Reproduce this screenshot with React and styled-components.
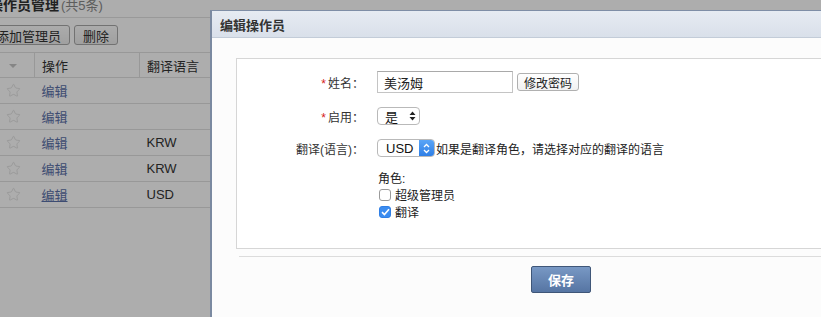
import React from 'react';
import styled, { createGlobalStyle } from 'styled-components';
import { Star } from 'lucide-react';

const GlobalStyle = createGlobalStyle`
  html, body { margin: 0; padding: 0; background: #fff; overflow: hidden; }
  body {
    font-family: "Liberation Sans", "Noto Sans CJK SC", sans-serif;
    font-size: 12px;
    color: #333;
  }
`;

/* --- page under the dialog --- */
const Page = styled.div`
  position: relative;
  width: 821px;
  height: 317px;
  overflow: hidden;
`;

const PageInner = styled.div`
  margin-left: -13px;
`;

const TitleBar = styled.div`
  height: 21px;
  border-bottom: 1px solid #e2e2e2;
  box-sizing: border-box;
  padding-left: 2px;
`;

const PageTitle = styled.h2`
  margin: -3px 0 0;
  font-size: 14px;
  line-height: 16px;
  font-weight: 700;
  color: #333;
`;

const Count = styled.span`
  font-weight: 400;
  font-size: 13px;
  color: #8a8a8a;
  margin-left: 2px;
`;

const Toolbar = styled.div`
  display: flex;
  gap: 4px;
  padding: 7px 0;
`;

const ToolButton = styled.button`
  height: 20px;
  padding: 0 8px;
  font-family: inherit;
  font-size: 13px;
  color: #333;
  background: linear-gradient(#fdfdfd, #ececec);
  border: 1px solid #a8a8a8;
  border-radius: 3px;
`;

const Table = styled.table`
  width: 480px;
  border-collapse: collapse;
  font-size: 13px;
`;

const Th = styled.th`
  height: 24px;
  padding: 0 0 0 ${({ pad }) => pad ?? 7}px;
  width: ${({ w }) => w}px;
  text-align: left;
  font-weight: 400;
  color: #333;
  border-top: 1px solid #e0e0e0;
  border-bottom: 1px solid #e0e0e0;
  border-right: 1px solid #e0e0e0;
`;

const Caret = styled.span`
  display: inline-block;
  margin-left: 22px;
  border-left: 4px solid transparent;
  border-right: 4px solid transparent;
  border-top: 4px solid #c4c4c4;
  vertical-align: middle;
`;

const Tr = styled.tr`
  border-bottom: 1px solid #e0e0e0;
`;

const Td = styled.td`
  height: 26px;
  box-sizing: border-box;
  padding: 0 0 0 ${({ pad }) => pad ?? 7}px;
  color: #333;
  vertical-align: middle;
`;

const StarCell = styled(Td)`
  padding-left: 19px;
  line-height: 0;
`;

const EditLink = styled.a`
  color: #5b70a8;
  text-decoration: ${({ underline }) => (underline ? 'underline' : 'none')};
`;

const Overlay = styled.div`
  position: absolute;
  inset: 0;
  background: rgba(0, 0, 0, 0.32);
`;

/* --- dialog --- */
const Modal = styled.div`
  position: absolute;
  left: 210px;
  top: 10px;
  width: 700px;
  height: 400px;
  background: #fcfcfc;
  border-left: 2px solid #7b8aa1;
  border-top: 1px solid #7f8ea6;
`;

const ModalHeader = styled.div`
  height: 26px;
  display: flex;
  align-items: center;
  padding-left: 8px;
  background: linear-gradient(#e6ebf2, #d9e0ea);
  border-bottom: 1px solid #c3ccd8;
  font-size: 13px;
  font-weight: 700;
  color: #333;
`;

const ModalBody = styled.div`
  padding: 20px 0 0 24px;
`;

const Fieldset = styled.div`
  height: 191px;
  background: #fff;
  border: 1px solid #d6d6d6;
  padding-top: 12px;
  box-sizing: border-box;
`;

const FormRow = styled.div`
  display: grid;
  grid-template-columns: 127px 1fr;
  column-gap: 13px;
  align-items: center;
  margin-bottom: ${({ mb }) => mb ?? 14}px;
`;

const Label = styled.label`
  text-align: right;
  font-size: 12px;
  color: #333;
`;

const Required = styled.span`
  color: #d42020;
  font-size: 12px;
  margin-right: 2px;
`;

const Controls = styled.div`
  display: flex;
  align-items: center;
  gap: ${({ gap }) => gap ?? 0}px;
`;

const TextInput = styled.div`
  width: 136px;
  height: 22px;
  box-sizing: border-box;
  border: 1px solid #c4c4c4;
  border-top-color: #a9a9a9;
  padding: 0 6px;
  display: flex;
  align-items: center;
  font-size: 13px;
  color: #222;
`;

const SmallButton = styled.button`
  height: 18px;
  padding: 0 6px;
  font-family: inherit;
  font-size: 12px;
  color: #222;
  background: linear-gradient(#fff, #f1f1f1);
  border: 1px solid #b0b0b0;
  border-radius: 3px;
`;

const Select = styled.div`
  width: ${({ w }) => w}px;
  height: 18px;
  box-sizing: border-box;
  border: 1px solid #b9b9b9;
  border-radius: 4px;
  background: #fff;
  display: flex;
  align-items: center;
  overflow: hidden;
  font-size: 13px;
  color: #111;
`;

const SelectText = styled.span`
  flex: 1;
  padding-left: ${({ pad }) => pad ?? 7}px;
`;

const SelectArrow = styled.span`
  width: ${({ blue }) => (blue ? 15 : 14)}px;
  height: 100%;
  display: flex;
  align-items: center;
  justify-content: center;
  background: ${({ blue }) => (blue ? 'linear-gradient(#5aa5f7, #2f7fe6)' : 'transparent')};
`;

const Hint = styled.span`
  font-size: 12px;
  color: #222;
`;

const RoleBlock = styled.div`
  padding-left: 140px;
  margin-top: 15px;
`;

const RoleTitle = styled.div`
  height: 14px;
  line-height: 14px;
  font-size: 12px;
  color: #222;
  padding-left: 1px;
`;

const CheckRow = styled.div`
  height: 17px;
  display: flex;
  align-items: center;
  gap: 4px;
  padding-left: 2px;
  font-size: 12px;
  color: #222;
`;

const Box = styled.span`
  width: 12px;
  height: 12px;
  box-sizing: border-box;
  border-radius: 3px;
  border: 1px solid ${({ checked }) => (checked ? '#2f7fe6' : '#9a9a9a')};
  background: ${({ checked }) => (checked ? '#3b8cf0' : '#fff')};
  display: flex;
  align-items: center;
  justify-content: center;
`;

const Footer = styled.div`
  margin: 7px 0 0 3px;
  border-top: 1px solid #dcdcdc;
  padding: 9px 0 0 292px;
`;

const SaveButton = styled.button`
  width: 60px;
  height: 27px;
  font-family: inherit;
  font-size: 13px;
  font-weight: 700;
  color: #fff;
  background: linear-gradient(#7898c4, #5675a3);
  border: 1px solid #3f5678;
  border-radius: 2px;
`;

const UpDown = ({ color }) => (
  <svg width="7" height="10" viewBox="0 0 7 10">
    <path d="M0.5 4 L3.5 0.5 L6.5 4 Z M0.5 6 L3.5 9.5 L6.5 6 Z" fill={color} />
  </svg>
);

const Chevrons = () => (
  <svg width="7" height="11" viewBox="0 0 7 11" fill="none" stroke="#fff" strokeWidth="1.3">
    <path d="M1 4 L3.5 1.5 L6 4" />
    <path d="M1 7 L3.5 9.5 L6 7" />
  </svg>
);

const Check = () => (
  <svg width="9" height="8" viewBox="0 0 9 8" fill="none" stroke="#fff" strokeWidth="1.6">
    <path d="M1 4.2 L3.4 6.5 L8 1.2" />
  </svg>
);

const rows = [
  { lang: '' },
  { lang: '' },
  { lang: 'KRW' },
  { lang: 'KRW' },
  { lang: 'USD', underline: true },
];

export default function App() {
  return (
    <>
      <GlobalStyle />
      <Page>
        <PageInner>
          <TitleBar>
            <PageTitle>
              操作员管理<Count>(共5条)</Count>
            </PageTitle>
          </TitleBar>
          <Toolbar>
            <ToolButton>添加管理员</ToolButton>
            <ToolButton>删除</ToolButton>
          </Toolbar>
          <Table>
            <thead>
              <tr>
                <Th w={47} pad={0}><Caret /></Th>
                <Th w={97}>操作</Th>
                <Th>翻译语言</Th>
              </tr>
            </thead>
            <tbody>
              {rows.map((r, i) => (
                <Tr key={i}>
                  <StarCell>
                    <Star size={15} strokeWidth={1.1} color="#d6d6d6" />
                  </StarCell>
                  <Td><EditLink underline={r.underline}>编辑</EditLink></Td>
                  <Td>{r.lang}</Td>
                </Tr>
              ))}
            </tbody>
          </Table>
        </PageInner>
        <Overlay />
        <Modal>
          <ModalHeader>编辑操作员</ModalHeader>
          <ModalBody>
            <Fieldset>
              <FormRow>
                <Label><Required>*</Required>姓名：</Label>
                <Controls gap={4}>
                  <TextInput>美汤姆</TextInput>
                  <SmallButton>修改密码</SmallButton>
                </Controls>
              </FormRow>
              <FormRow>
                <Label><Required>*</Required>启用：</Label>
                <Controls>
                  <Select w={43}>
                    <SelectText>是</SelectText>
                    <SelectArrow><UpDown color="#222" /></SelectArrow>
                  </Select>
                </Controls>
              </FormRow>
              <FormRow mb={0}>
                <Label>翻译(语言)：</Label>
                <Controls gap={1}>
                  <Select w={58}>
                    <SelectText pad={8}>USD</SelectText>
                    <SelectArrow blue><Chevrons /></SelectArrow>
                  </Select>
                  <Hint>如果是翻译角色，请选择对应的翻译的语言</Hint>
                </Controls>
              </FormRow>
              <RoleBlock>
                <RoleTitle>角色:</RoleTitle>
                <CheckRow>
                  <Box />
                  超级管理员
                </CheckRow>
                <CheckRow>
                  <Box checked><Check /></Box>
                  翻译
                </CheckRow>
              </RoleBlock>
            </Fieldset>
            <Footer>
              <SaveButton>保存</SaveButton>
            </Footer>
          </ModalBody>
        </Modal>
      </Page>
    </>
  );
}
